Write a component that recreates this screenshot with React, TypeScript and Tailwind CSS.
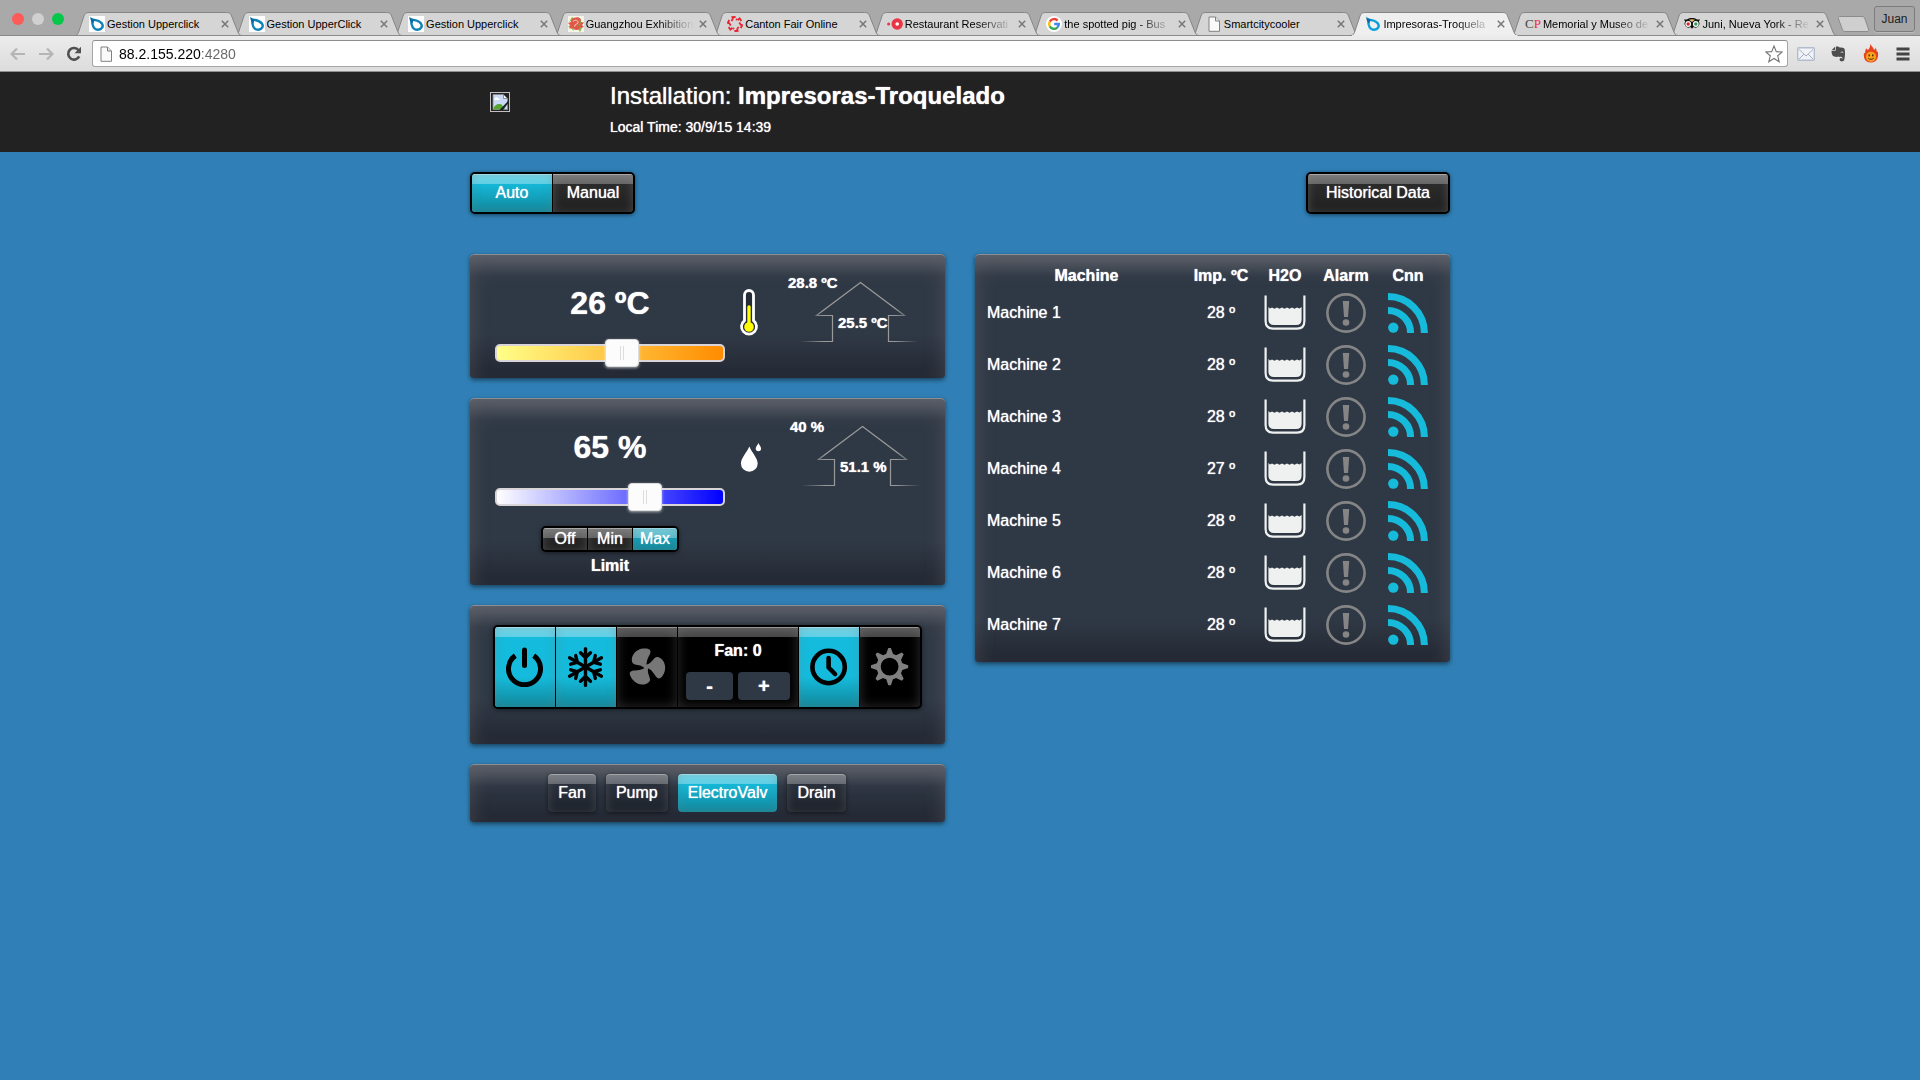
import React, { useState } from "react";

/* ---------- Browser icons ---------- */

function LeafIcon({ plain = false }: { plain?: boolean }) {
  return (
    <svg viewBox="0 0 16 16" className="size-4 shrink-0" aria-hidden="true">
      {!plain && <rect width="16" height="16" fill="#fff" />}
      <path
        d="M3.2 3.6 C6 3.8 10.6 4.8 12.8 7.4 C15 10.4 12.8 13.8 9.2 13.8 C4.8 13.8 3 9.6 3.2 3.6Z"
        fill="none"
        stroke={plain ? "#0b9fdc" : "#0f83b8"}
        strokeWidth="2.4"
        strokeLinejoin="round"
      />
      <path d="M1.4 .6 C2.2 2.4 3.6 2.8 5.6 3.2 L4.4 7.6 C2.2 6.4 1 3.6 1.4 .6Z" fill="#0a6ba3" />
    </svg>
  );
}

function FlowerIcon() {
  return (
    <svg viewBox="0 0 16 16" className="size-4 shrink-0" aria-hidden="true">
      <rect width="16" height="16" fill="#f4f4e8" />
      <path d="M1 6 L4 1 L7 3Z M0 10 L4 9 L6 15Z M10 13 L15 10 L12 16Z" fill="#8fb84a" />
      <path d="M8 1.5 C11 .5 14 3 13 6 L16 6.5 L14 9 L16 11 L12 12 C11 14.6 6 14.6 4.6 12 L1 12.4 L2.4 9.4 L0 7 L3 6 C3 3 5 1.5 8 1.5Z" fill="#e25549" />
      <path d="M5 5.5 C7 3.5 10 4 10 6.4 C10 8.6 6.4 7.6 6.6 10.6" fill="none" stroke="#f8d9c8" />
      <path d="M11.5 3 C13 5 12.4 9 9.6 10" fill="none" stroke="#7aa63e" strokeWidth="1.2" />
    </svg>
  );
}

function CantonIcon() {
  return (
    <svg viewBox="0 0 16 16" className="size-4 shrink-0" aria-hidden="true">
      <g fill="none" stroke="#e8202e" strokeWidth="1.8">
        {[0, 60, 120, 180, 240, 300].map((a) => (
          <path key={a} d="M6 3.6 L5.4 1.2 L8.6 1 M8.8 3.4 L10.6 3.6" transform={`rotate(${a} 8 8)`} />
        ))}
      </g>
    </svg>
  );
}

function OpenTableIcon() {
  return (
    <svg viewBox="0 0 16 16" className="size-4 shrink-0" aria-hidden="true">
      <circle cx="1.6" cy="8" r="1.5" fill="#ea3546" />
      <circle cx="10.2" cy="8" r="5.7" fill="#ea3546" />
      <circle cx="10.2" cy="8" r="1.8" fill="#fff" />
    </svg>
  );
}

function GoogleIcon() {
  return (
    <svg viewBox="0 0 16 16" className="size-4 shrink-0" aria-hidden="true">
      <circle cx="8" cy="8" r="8" fill="#fff" />
      <g fill="none" strokeWidth="2.4">
        <path d="M11.6 4.6 A4.8 4.8 0 0 0 3.8 5.6" stroke="#ea4335" />
        <path d="M3.8 5.6 A4.8 4.8 0 0 0 3.8 10.4" stroke="#fbbc05" />
        <path d="M3.8 10.4 A4.8 4.8 0 0 0 11.2 11.6" stroke="#34a853" />
        <path d="M11.2 11.6 A4.8 4.8 0 0 0 12.8 8 H8.2" stroke="#4285f4" />
      </g>
    </svg>
  );
}

function PageIcon() {
  return (
    <svg viewBox="0 0 16 16" className="size-4 shrink-0" aria-hidden="true">
      <path d="M3 1 H9.5 L13.5 5 V15.3 H3Z" fill="#fafafa" stroke="#808080" />
      <path d="M9.5 1 V5 H13.5" fill="#e4e4e4" stroke="#808080" />
    </svg>
  );
}

function CpIcon() {
  return (
    <span className="flex h-4 w-4 shrink-0 items-center justify-center font-['Liberation_Serif',serif] text-[13px] leading-4" aria-hidden="true">
      <span className="text-[#444]">C</span>
      <span className="text-[#e8303c]">P</span>
    </span>
  );
}

function OwlIcon() {
  return (
    <svg viewBox="0 0 16 16" className="size-4 shrink-0" aria-hidden="true">
      <path d="M0 3.5 H3 C6 1.6 10 1.6 13 3.5 H16 L14.8 5.4 A4 4 0 0 1 9.6 11.1 L8 12.8 L6.4 11.1 A4 4 0 0 1 1.2 5.4Z" fill="#111" />
      <circle cx="4.2" cy="8" r="2.9" fill="#fff" />
      <circle cx="11.8" cy="8" r="2.9" fill="#fff" />
      <path d="M5 3.8 C7 2.9 9 2.9 11 3.8 L8 6Z" fill="#e8c36a" />
      <circle cx="4.2" cy="8" r="1.7" fill="#d8262c" />
      <circle cx="11.8" cy="8" r="1.7" fill="#2e9b57" />
    </svg>
  );
}

/* ---------- Browser chrome ---------- */

type Tab = { title: string; icon: React.ReactNode; fade?: boolean; active?: boolean };

const tabs: Tab[] = [
  { title: "Gestion Upperclick", icon: <LeafIcon /> },
  { title: "Gestion UpperClick", icon: <LeafIcon /> },
  { title: "Gestion Upperclick", icon: <LeafIcon /> },
  { title: "Guangzhou Exhibition", icon: <FlowerIcon />, fade: true },
  { title: "Canton Fair Online", icon: <CantonIcon /> },
  { title: "Restaurant Reservati", icon: <OpenTableIcon />, fade: true },
  { title: "the spotted pig - Bus", icon: <GoogleIcon />, fade: true },
  { title: "Smartcitycooler", icon: <PageIcon /> },
  { title: "Impresoras-Troquela", icon: <LeafIcon plain />, fade: true, active: true },
  { title: "Memorial y Museo de", icon: <CpIcon />, fade: true },
  { title: "Juni, Nueva York - Re", icon: <OwlIcon />, fade: true },
];

function BrowserTab({ tab, order }: { tab: Tab; order: number }) {
  return (
    <div className="relative flex h-6 min-w-0 flex-1 items-center gap-[2px] pr-[3px] pl-[14px]" style={{ zIndex: order }}>
      <svg
        viewBox="0 0 168 24"
        preserveAspectRatio="none"
        className="absolute top-0 left-0 -z-10 h-6 w-[calc(100%+8px)]"
        aria-hidden="true"
      >
        <path
          d="M0 23.5 C3 23 3.4 21 4 19 L9 4 C10 1.5 11 .5 14 .5 H152 C155 .5 156 1.5 157 4 L163 19 C164 22 165 23.5 168 23.5"
          fill={tab.active ? "#efefef" : "#d5d5d5"}
          stroke="#858585"
        />
        {tab.active ? (
          <path d="M1 23.5 H167" stroke="#ececec" />
        ) : (
          <path d="M0 23.5 H168" stroke="#8a8a8a" />
        )}
      </svg>
      {tab.icon}
      <button
        type="button"
        className={
          "h-5 min-w-0 flex-1 overflow-hidden text-left text-[11px] leading-5 whitespace-nowrap text-black " +
          (tab.fade ? "[mask-image:linear-gradient(to_right,#000_calc(100%-36px),transparent)]" : "")
        }
      >
        {tab.title}
      </button>
      <button type="button" aria-label={"Close " + tab.title} className="flex h-4 w-[14px] shrink-0 items-center justify-center">
        <svg viewBox="0 0 8 8" className="size-2" aria-hidden="true">
          <path d="M.8 .8 L7.2 7.2 M7.2 .8 L.8 7.2" stroke="#777" strokeWidth="1.5" />
        </svg>
      </button>
    </div>
  );
}

function BrowserChrome() {
  return (
    <div>
      <div className="flex h-9 bg-[#a9a9a9] shadow-[inset_0_-1px_0_#8a8a8a]">
        <div className="flex w-[75px] shrink-0 gap-2 pt-[13px] pl-3">
          <button type="button" aria-label="Close window" className="size-3 rounded-full bg-[#fc5b57]" />
          <button type="button" aria-label="Minimise window" className="size-3 rounded-full bg-[#d0d0d0]" />
          <button type="button" aria-label="Zoom window" className="size-3 rounded-full bg-[#05c74a]" />
        </div>
        <div className="isolate flex min-w-0 flex-1 pt-3 pr-2">
          {tabs.map((t, i) => (
            <BrowserTab key={i} tab={t} order={t.active ? 30 : 20 - i} />
          ))}
        </div>
        <button type="button" aria-label="New tab" className="mt-4 h-4 w-8 shrink-0">
          <svg viewBox="0 0 32 16" className="h-4 w-8" aria-hidden="true">
            <path
              d="M1.5 .5 H24 C26 .5 26.5 1.5 27 3 L30.5 13 C31 15 30.5 15.5 29 15.5 H8 C6 15.5 5 15 4.4 13.5 L.6 3 C0 1.3 .3 .5 1.5 .5Z"
              fill="#cfcfcf"
              stroke="#8c8c8c"
            />
          </svg>
        </button>
        <button
          type="button"
          className="mt-[6px] mr-[5px] ml-1 h-[26px] w-[41px] shrink-0 rounded-[3px] border border-[#7c7c7c] bg-[#a6a6a6] text-[12px] text-[#1c1c1c] shadow-[0_1px_0_#bbb]"
        >
          Juan
        </button>
      </div>

      <div className="flex h-9 items-center border-b border-[#8e8e8e] bg-linear-to-b from-[#ececec] to-[#dcdcdc] pr-[10px] pl-[10px]">
        <div className="mr-[10px] flex gap-3">
          <button type="button" aria-label="Back">
            <svg viewBox="0 0 16 16" className="size-4" aria-hidden="true">
              <path d="M15 8 H2 M7 2.5 L1.5 8 L7 13.5" fill="none" stroke="#b5b5b5" strokeWidth="2.2" />
            </svg>
          </button>
          <button type="button" aria-label="Forward">
            <svg viewBox="0 0 16 16" className="size-4" aria-hidden="true">
              <path d="M1 8 H14 M9 2.5 L14.5 8 L9 13.5" fill="none" stroke="#b5b5b5" strokeWidth="2.2" />
            </svg>
          </button>
          <button type="button" aria-label="Reload">
            <svg viewBox="0 0 16 16" className="size-4" aria-hidden="true">
              <path d="M12.6 4.2 A5.8 5.8 0 1 0 13.2 10.4" fill="none" stroke="#505050" strokeWidth="2.6" />
              <path d="M15 .8 V7.2 H8.6Z" fill="#505050" />
            </svg>
          </button>
        </div>
        <div className="flex h-[27px] min-w-0 flex-1 items-center rounded-[3px] border border-[#a6a6a6] border-t-[#8e8e8e] bg-white pr-1 pl-[5px]">
          <PageIcon />
          <input
            aria-label="Address"
            defaultValue="88.2.155.220:4280"
            className="ml-[5px] h-6 min-w-0 flex-1 bg-[linear-gradient(90deg,#000_82px,#666_82px)] bg-clip-text text-[14px] text-transparent outline-none"
          />
          <button type="button" aria-label="Bookmark this page">
            <svg viewBox="0 0 18 18" className="size-[18px]" aria-hidden="true">
              <path
                d="M9 1 L11.3 6.6 L17.2 7 L12.7 10.8 L14.2 16.8 L9 13.5 L3.8 16.8 L5.3 10.8 L.8 7 L6.7 6.6Z"
                fill="#fff"
                stroke="#757575"
                strokeWidth="1.1"
              />
            </svg>
          </button>
        </div>
        <div className="ml-[9px] flex items-center gap-4">
          <button type="button" aria-label="Mail">
            <svg viewBox="0 0 18 14" className="h-[14px] w-[18px]" aria-hidden="true">
              <rect x=".7" y=".7" width="16.6" height="12.6" rx="1" fill="#f1f3f8" stroke="#b3bccd" strokeWidth="1.4" />
              <path d="M2 2.5 L9 9 L16 2.5 M2 12 L6.8 7.2 M16 12 L11.2 7.2" fill="none" stroke="#a4aec2" />
            </svg>
          </button>
          <button type="button" aria-label="Notes clipper">
            <svg viewBox="0 0 15 16" className="h-4 w-[15px]" aria-hidden="true">
              <path
                d="M4.8 .6 C6 .2 8 .4 8.6 1.4 C10.5 1.4 13.2 1.6 13.6 3 C14.2 5.5 14.2 10 13.3 13.8 C12.8 15.8 9 16 8.6 13.8 C8.5 12.2 9.6 11.6 10.8 12 L10.8 13.2 C11.8 13 11.8 11 10 10.8 C8.5 10.8 8.3 11.4 7.8 10.4 C6.5 11.2 3 11 1.8 9.8 C.7 8.5 .5 6 .6 4.8 H3.8 C4.6 4.8 4.8 4.6 4.8 3.8Z"
                fill="#4d4d4d"
              />
              <path d="M.8 4 L4 .8 V4Z" fill="#4d4d4d" />
              <path d="M10 6.6 C10.6 5.4 11.8 5.6 12 7" fill="none" stroke="#ddd" strokeWidth="1" />
            </svg>
          </button>
          <button type="button" aria-label="Flame extension">
            <svg viewBox="0 0 18 20" className="h-5 w-[18px]" aria-hidden="true">
              <path
                d="M8.2 0 C9.4 2 11.6 3.4 12 5.8 C13 5.4 13.4 4.4 13.4 3.4 C14.4 5 14.8 6.6 14.8 8 L15.8 7.6 C17 13 15.2 18.6 9 18.6 C2.8 18.6 1.2 13.6 2 8.8 L3.2 9.4 C3 7.4 3.4 5.6 4.6 4.2 C4.8 5 5.2 5.6 6 6 C7.6 4.4 8.4 2.4 8.2 0Z"
                fill="#e8431f"
              />
              <circle cx="9" cy="12.8" r="5" fill="#fba51f" />
              <ellipse cx="7.2" cy="11.4" rx=".7" ry="1.1" fill="#3a1b08" />
              <ellipse cx="10.8" cy="11.4" rx=".7" ry="1.1" fill="#3a1b08" />
              <path d="M6.2 14 C7.2 15.8 10.8 15.8 11.8 14" fill="none" stroke="#3a1b08" strokeWidth=".9" />
            </svg>
          </button>
          <button type="button" aria-label="Menu">
            <svg viewBox="0 0 14 14" className="size-[14px]" aria-hidden="true">
              <path d="M.5 2 H13.5 M.5 7 H13.5 M.5 12 H13.5" stroke="#444" strokeWidth="3" />
            </svg>
          </button>
        </div>
      </div>
    </div>
  );
}

/* ---------- Shared surfaces ---------- */

const panel =
  "rounded-[4px] bg-[#2f3945] bg-[linear-gradient(to_bottom,rgba(255,255,255,0.13),transparent_22px),linear-gradient(to_top,#232833,transparent_44px)] shadow-[inset_0_1px_0_rgba(255,255,255,0.3),inset_0_12px_20px_rgba(136,128,134,0.32),0_2px_5px_rgba(0,0,0,0.5)]";

const glossCyan =
  "bg-[#15bbdc] bg-[linear-gradient(to_bottom,rgba(255,255,255,0.42),rgba(255,255,255,0.32)),linear-gradient(to_top,#11889c,transparent_30px)] bg-[length:100%_10px,100%_100%] bg-no-repeat shadow-[inset_0_1px_0_rgba(255,255,255,0.3),inset_0_0_10px_rgba(110,128,128,0.35)]";

const glossDark =
  "bg-[#2c2c2c] bg-[linear-gradient(to_bottom,rgba(255,255,255,0.36),rgba(255,255,255,0.28)),linear-gradient(to_top,#202020,transparent_30px)] bg-[length:100%_10px,100%_100%] bg-no-repeat shadow-[inset_0_1px_0_rgba(255,255,255,0.35),inset_0_2px_10px_rgba(140,140,140,0.4)]";

const glossBlack =
  "bg-black bg-[linear-gradient(to_bottom,rgba(255,255,255,0.34),rgba(255,255,255,0.28))] bg-[length:100%_10px] bg-no-repeat shadow-[inset_0_1px_0_rgba(255,255,255,0.35),inset_0_0_12px_rgba(128,128,128,0.35)]";

const glossSlate =
  "bg-[#2b323d] bg-[linear-gradient(to_bottom,rgba(255,255,255,0.38),rgba(255,255,255,0.28)),linear-gradient(to_top,#1d222b,transparent_30px)] bg-[length:100%_10px,100%_100%] bg-no-repeat shadow-[inset_0_1px_0_rgba(255,255,255,0.3),inset_0_2px_10px_rgba(128,128,128,0.35),0_1px_4px_rgba(0,0,0,0.5)]";

const groupFrame = "flex gap-px overflow-hidden rounded-[5px] border-2 border-black bg-black shadow-[0_1px_4px_rgba(0,0,0,0.5)]";

/* ---------- Dashboard pieces ---------- */

function RangeControl(props: { label: string; min: number; max: number; value: number; onChange: (v: number) => void; track: string }) {
  return (
    <div className="relative mt-4 h-7">
      <div className={"absolute inset-x-0 top-[5px] h-[18px] rounded-[5px] border-2 border-[#d8d4d8] " + props.track} />
      <input
        type="range"
        aria-label={props.label}
        min={props.min}
        max={props.max}
        value={props.value}
        onChange={(e) => props.onChange(Number(e.target.value))}
        className="absolute -inset-x-[18px] top-0 h-7 w-[calc(100%+36px)] cursor-pointer appearance-none bg-transparent [&::-webkit-slider-thumb]:h-7 [&::-webkit-slider-thumb]:w-[34px] [&::-webkit-slider-thumb]:appearance-none [&::-webkit-slider-thumb]:rounded-[4px] [&::-webkit-slider-thumb]:border [&::-webkit-slider-thumb]:border-[#dddddd] [&::-webkit-slider-thumb]:bg-[#fcfcfc] [&::-webkit-slider-thumb]:bg-[linear-gradient(90deg,#ddd_1px,transparent_1px,transparent_3px,#ddd_3px)] [&::-webkit-slider-thumb]:bg-[length:4px_14px] [&::-webkit-slider-thumb]:bg-center [&::-webkit-slider-thumb]:bg-no-repeat [&::-webkit-slider-thumb]:shadow-[0_1px_3px_rgba(255,255,255,0.6)]"
      />
    </div>
  );
}

function House({ outside, inside, id }: { outside: string; inside: string; id: string }) {
  return (
    <div className="relative mt-5 h-[70px] w-[130px] shrink-0 text-[15px] leading-[18px] font-bold">
      <svg viewBox="0 0 130 70" className="h-[70px] w-[130px]" aria-hidden="true">
        <defs>
          <linearGradient id={id} x1="0" x2="1">
            <stop offset="0" stopColor="#999" stopOpacity="0" />
            <stop offset=".2" stopColor="#999" />
            <stop offset=".8" stopColor="#999" />
            <stop offset="1" stopColor="#999" stopOpacity="0" />
          </linearGradient>
        </defs>
        <path
          d="M12 67.5 H44.5 V41.5 H28.5 L72.5 8.5 L116.5 41.5 H100.5 V67.5 H130"
          fill="none"
          stroke={`url(#${id})`}
          strokeWidth="1.2"
        />
      </svg>
      <span className="absolute top-0 left-0 whitespace-nowrap">{outside}</span>
      <span className="absolute top-10 left-[50px] whitespace-nowrap">{inside}</span>
    </div>
  );
}

function TemperaturePanel() {
  const [value, setValue] = useState(26);
  return (
    <section aria-label="Temperature" className={"flex px-[25px] pb-[11px] " + panel}>
      <div className="w-[230px] shrink-0 pt-[29px]">
        <p className="text-center text-[32px] leading-10 font-bold">{value} ºC</p>
        <RangeControl
          label="Target temperature"
          min={15}
          max={35}
          value={value}
          onChange={setValue}
          track="bg-[linear-gradient(90deg,#ffff88,#ff8c00)]"
        />
      </div>
      <svg viewBox="0 0 30 47" className="mt-[35px] ml-[9px] h-[47px] w-[30px] shrink-0" aria-hidden="true">
        <path d="M10.5 31.6 V6 A4.5 4.5 0 0 1 19.5 6 V31.6 A7.5 7.5 0 1 1 10.5 31.6Z" fill="#252b36" stroke="#fff" strokeWidth="2.8" />
        <path d="M15 18 V36" stroke="#ff0" strokeWidth="3.4" strokeLinecap="round" />
        <circle cx="15" cy="38" r="4.8" fill="#ff0" />
      </svg>
      <div className="ml-6">
        <House id="houseT" outside="28.8 ºC" inside="25.5 ºC" />
      </div>
    </section>
  );
}

function HumidityPanel() {
  const [value, setValue] = useState(65);
  const [limit, setLimit] = useState("Max");
  return (
    <section aria-label="Humidity" className={"flex px-[25px] pb-[10px] " + panel}>
      <div className="flex w-[230px] shrink-0 flex-col pt-[29px]">
        <p className="text-center text-[32px] leading-10 font-bold">{value} %</p>
        <RangeControl
          label="Target humidity"
          min={0}
          max={100}
          value={value}
          onChange={setValue}
          track="bg-[linear-gradient(90deg,#ffffff,#0000ff)]"
        />
        <div className={"mt-[15px] self-center " + groupFrame}>
          {["Off", "Min", "Max"].map((l) => (
            <button
              key={l}
              type="button"
              aria-pressed={limit === l}
              onClick={() => setLimit(l)}
              className={"h-[22px] w-11 text-[16px] leading-[22px] " + (limit === l ? glossCyan : glossDark)}
            >
              {l}
            </button>
          ))}
        </div>
        <p className="mt-[5px] text-center text-[16px] leading-[18px] font-bold">Limit</p>
      </div>
      <svg viewBox="0 0 32 30" className="mt-[45px] ml-[9px] h-[30px] w-8 shrink-0" aria-hidden="true">
        <path d="M15.3 3.5 C17.5 9 23.7 15 23.7 20.5 A8.4 8.2 0 0 1 6.9 20.5 C6.9 15 13.2 9 15.3 3.5Z" fill="#fff" />
        <path d="M24.4 0 C25.2 1.8 27.1 3.8 27.1 5.6 A2.7 2.6 0 0 1 21.7 5.6 C21.7 3.8 23.7 1.8 24.4 0Z" fill="#fff" />
      </svg>
      <div className="ml-6">
        <House id="houseH" outside="40 %" inside="51.1 %" />
      </div>
    </section>
  );
}

function PowerIcon() {
  return (
    <svg viewBox="0 0 38 40" className="h-10 w-[38px]" aria-hidden="true">
      <path d="M9.3 8.6 A16 16 0 1 0 27.7 8.6" fill="none" stroke="#000" strokeWidth="5" />
      <path d="M18.5 3 V18.5" stroke="#000" strokeWidth="5" strokeLinecap="round" />
    </svg>
  );
}

function SnowIcon() {
  return (
    <svg viewBox="0 0 40 42" className="h-[42px] w-10" aria-hidden="true">
      <g fill="none" stroke="#000" strokeWidth="3.4" strokeLinecap="round">
        {[0, 60, 120, 180, 240, 300].map((a) => (
          <path key={a} d="M19.5 21 V2.6 M14.5 6.8 L19.5 11.6 L24.5 6.8" transform={`rotate(${a} 19.5 21)`} />
        ))}
      </g>
    </svg>
  );
}

function FanIcon() {
  return (
    <svg viewBox="0 0 38 38" className="size-[38px]" aria-hidden="true">
      <g fill="#777">
        {[0, 120, 240].map((a) => (
          <path
            key={a}
            d="M1 2 C-1 -4 1 -8 3.6 -13 C5.4 -17.6 2 -19 -3.6 -18.4 C-11 -17.4 -15.6 -11 -14.4 -5.6 C-13.4 -.6 -6 -3.6 -2 1Z"
            transform={`translate(18.4 19) rotate(${a})`}
          />
        ))}
        <circle cx="18.4" cy="19" r="2.4" />
      </g>
    </svg>
  );
}

function ClockIcon() {
  return (
    <svg viewBox="0 0 38 38" className="size-[38px]" aria-hidden="true">
      <circle cx="18.6" cy="19" r="16.2" fill="none" stroke="#000" strokeWidth="4.6" />
      <path d="M18.6 10 V19.5 L25 26" fill="none" stroke="#000" strokeWidth="4.6" strokeLinecap="round" strokeLinejoin="round" />
    </svg>
  );
}

function GearIcon() {
  return (
    <svg viewBox="0 0 38 38" className="size-[38px]" aria-hidden="true">
      <circle cx="18.6" cy="18.6" r="11" fill="none" stroke="#808080" strokeWidth="4.2" />
      {[0, 45, 90, 135, 180, 225, 270, 315].map((a) => (
        <path key={a} d="M-3.6 -12 L-1.3 -18.6 H1.3 L3.6 -12Z" fill="#808080" transform={`translate(18.6 18.6) rotate(${a})`} />
      ))}
    </svg>
  );
}

const modeButton = "flex h-20 w-[60px] items-center justify-center ";

function ModePanel() {
  const [fan, setFan] = useState(0);
  return (
    <section aria-label="Modes" className={"flex justify-center pt-5 pb-[35px] " + panel}>
      <div className={groupFrame}>
        <button type="button" aria-label="Power" className={modeButton + glossCyan}>
          <PowerIcon />
        </button>
        <button type="button" aria-label="Cooling" className={modeButton + glossCyan}>
          <SnowIcon />
        </button>
        <button type="button" aria-label="Ventilation" className={modeButton + glossBlack}>
          <FanIcon />
        </button>
        <div className={"flex h-20 w-[120px] flex-col items-center pt-[14px] " + glossBlack}>
          <p className="text-[16px] leading-5 font-bold">Fan: {fan}</p>
          <div className="mt-[11px] flex gap-[5px] text-[20px] leading-7 font-bold">
            <button type="button" aria-label="Decrease fan" onClick={() => setFan(Math.max(0, fan - 1))} className="h-7 rounded-[4px] bg-[#2f3945] px-5">
              -
            </button>
            <button type="button" aria-label="Increase fan" onClick={() => setFan(fan + 1)} className="h-7 rounded-[4px] bg-[#2f3945] px-5">
              +
            </button>
          </div>
        </div>
        <button type="button" aria-label="Schedule" className={modeButton + glossCyan}>
          <ClockIcon />
        </button>
        <button type="button" aria-label="Settings" className={modeButton + glossBlack}>
          <GearIcon />
        </button>
      </div>
    </section>
  );
}

function OutputsPanel() {
  return (
    <section aria-label="Outputs" className={"flex justify-center gap-[10px] py-[10px] pr-[21px] " + panel}>
      {["Fan", "Pump", "ElectroValv", "Drain"].map((n) => (
        <button
          key={n}
          type="button"
          className={"h-[38px] rounded-[4px] px-[10px] text-[16px] " + (n === "ElectroValv" ? glossCyan : glossSlate)}
        >
          {n}
        </button>
      ))}
    </section>
  );
}

/* ---------- Machines ---------- */

const machines = [
  { name: "Machine 1", temp: 28 },
  { name: "Machine 2", temp: 28 },
  { name: "Machine 3", temp: 28 },
  { name: "Machine 4", temp: 27 },
  { name: "Machine 5", temp: 28 },
  { name: "Machine 6", temp: 28 },
  { name: "Machine 7", temp: 28 },
];

function TankIcon() {
  return (
    <svg viewBox="0 0 42 36" className="mx-auto h-9 w-[42px]" role="img" aria-label="Water level full">
      <path d="M1.6 .5 V26 Q1.6 33.6 9 33.6 H33 Q40.4 33.6 40.4 26 V.5" fill="none" stroke="#eff1f0" strokeWidth="2.2" />
      <path
        d="M4.4 12 L6 13.4 L8 12.6 L10.5 13.8 L13 12.6 L15.5 13.8 L18 12.6 L20.5 13.8 L23 12.6 L25.5 13.8 L28 12.6 L30.5 13.8 L33 12.6 L35.5 13.6 L37.6 12 V24.5 Q37.6 30 32 30 H10 Q4.4 30 4.4 24.5Z"
        fill="#eff1f0"
      />
    </svg>
  );
}

function AlarmIcon() {
  return (
    <svg viewBox="0 0 40 40" className="mx-auto size-10" role="img" aria-label="No alarm">
      <circle cx="20" cy="20" r="18.6" fill="none" stroke="#858585" strokeWidth="2.6" />
      <path d="M16.8 8 H23.2 L22 24 H18Z" fill="#858585" />
      <circle cx="20" cy="29.5" r="3.3" fill="#858585" />
    </svg>
  );
}

function SignalIcon() {
  return (
    <svg viewBox="0 0 40 40" className="mx-auto size-10" role="img" aria-label="Connected">
      <circle cx="5.3" cy="34.6" r="5.2" fill="#16bbdc" />
      <path d="M0 3.6 A36.4 36.4 0 0 1 36.4 40 M0 17.4 A22.6 22.6 0 0 1 22.6 40" fill="none" stroke="#16bbdc" strokeWidth="7" />
    </svg>
  );
}

function MachinesPanel() {
  return (
    <section aria-label="Machines" className={"px-[10px] pt-[10px] pb-[11px] " + panel}>
      <table className="w-full table-fixed border-collapse text-[16px]">
        <colgroup>
          <col />
          <col className="w-[66px]" />
          <col className="w-[62px]" />
          <col className="w-[60px]" />
          <col className="w-[64px]" />
        </colgroup>
        <thead>
          <tr className="h-[23px] leading-[23px]">
            {["Machine", "Imp. ºC", "H2O", "Alarm", "Cnn"].map((h) => (
              <th key={h} scope="col" className="p-0 text-center font-bold whitespace-nowrap">
                {h}
              </th>
            ))}
          </tr>
        </thead>
        <tbody>
          {machines.map((m) => (
            <tr key={m.name} className="h-[52px]">
              <td className="p-0 pl-[2px]">{m.name}</td>
              <td className="p-0 text-center">{m.temp} º</td>
              <td className="p-0">
                <TankIcon />
              </td>
              <td className="p-0">
                <AlarmIcon />
              </td>
              <td className="p-0">
                <SignalIcon />
              </td>
            </tr>
          ))}
        </tbody>
      </table>
    </section>
  );
}

/* ---------- Page ---------- */

export default function App() {
  const [mode, setMode] = useState("Auto");
  return (
    <div className="min-h-screen bg-[#3080b7] font-['Liberation_Sans',Arial,sans-serif] text-white">
      <BrowserChrome />

      <header className="bg-[#222222] [text-shadow:0_0_1px_#fff]">
        <div className="mx-auto flex min-h-20 w-full max-w-[980px] pl-5">
          <svg viewBox="0 0 20 20" className="mt-5 mr-[100px] size-5 shrink-0" role="img" aria-label="Missing logo">
            <rect x=".5" y=".5" width="19" height="19" fill="none" stroke="#c0c0c0" />
            <path d="M3 2.5 H13.5 L17.5 6.5 V17.5 H3Z" fill="#c9d9f5" stroke="#8a8a8a" strokeWidth=".8" />
            <path d="M13.5 2.5 V6.5 H17.5Z" fill="#fff" stroke="#777" strokeWidth=".8" />
            <path d="M4.5 7 C5 5 7 5 8 6 C9.5 6 10 7.5 9 8 H5 C4 8 4 7.2 4.5 7Z" fill="#fff" />
            <path d="M3.2 17.3 C4 13 8 11 11.5 12.5 L15 17.3Z" fill="#55a630" />
            <path d="M9.5 18 L18 9 V11.5 L13 18Z" fill="#222" />
          </svg>
          <div className="pt-2">
            <h1 className="text-[24px] leading-8">
              Installation: <strong className="font-bold">Impresoras-Troquelado</strong>
            </h1>
            <p className="mt-[5px] text-[14px] leading-5">Local Time: 30/9/15 14:39</p>
          </div>
        </div>
      </header>

      <main className="mx-auto w-full max-w-[980px] pt-5 [text-shadow:0_0_1px_#fff] [&_button]:[text-shadow:0_0_1px_#fff]">
        <div className="flex items-start justify-between">
          <div className={groupFrame}>
            {["Auto", "Manual"].map((m) => (
              <button
                key={m}
                type="button"
                aria-pressed={mode === m}
                onClick={() => setMode(m)}
                className={"h-[38px] w-20 text-[16px] " + (mode === m ? glossCyan : glossDark)}
              >
                {m}
              </button>
            ))}
          </div>
          <div className={groupFrame}>
            <button type="button" className={"h-[38px] px-[18px] text-[16px] " + glossDark}>
              Historical Data
            </button>
          </div>
        </div>

        <div className="mt-10 grid grid-cols-2 items-start gap-[30px]">
          <div className="flex flex-col gap-5">
            <TemperaturePanel />
            <HumidityPanel />
            <ModePanel />
            <OutputsPanel />
          </div>
          <MachinesPanel />
        </div>
      </main>
    </div>
  );
}
